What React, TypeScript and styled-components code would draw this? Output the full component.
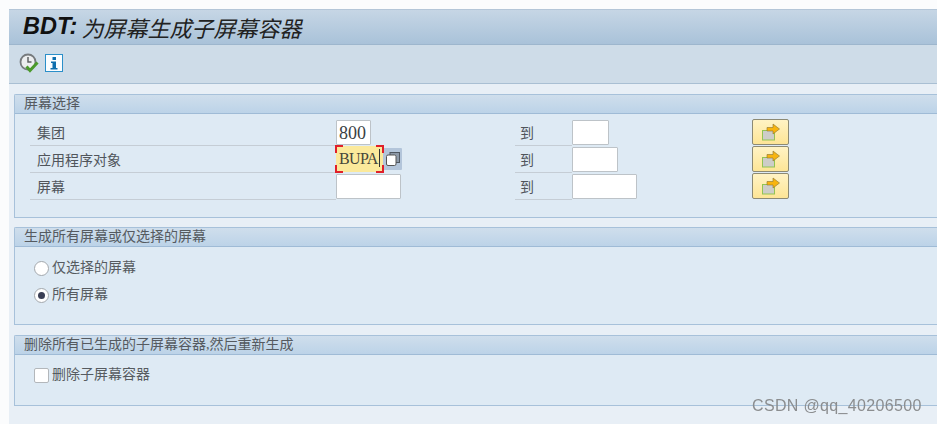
import React, { FC } from 'react';
import styled, { createGlobalStyle } from 'styled-components';

const GlobalStyle = createGlobalStyle`
  html, body {
    margin: 0;
    padding: 0;
    width: 937px;
    height: 424px;
    overflow: hidden;
    background: #fbfcfd;
    font-family: 'Liberation Serif', 'Noto Sans CJK SC', serif;
  }
`;

const Page = styled.div`
  width: 928px;
  height: 415px;
  margin: 9px 0 0 9px;
  background: #e8eff6;
  display: flex;
  flex-direction: column;
`;

const TitleBar = styled.div`
  height: 36px;
  box-sizing: border-box;
  padding: 0 0 1px 14px;
  display: flex;
  align-items: center;
  gap: 4px;
  background: linear-gradient(#c6d6e5, #a9c2d9);
  border-top: 1px solid #b4c6d8;
  border-bottom: 1px solid #9db6cd;
  color: #222;
  font-size: 22px;
  font-style: italic;
  white-space: nowrap;
`;

const TitleCode = styled.b`
  font-family: 'Liberation Sans', sans-serif;
  font-size: 23.5px;
  font-weight: 700;
  color: #111;
`;

const Toolbar = styled.div`
  height: 39px;
  box-sizing: border-box;
  padding: 0 0 3px 10px;
  display: flex;
  align-items: center;
  gap: 6px;
  background: #cedce8;
  border-bottom: 1px solid #a9bfd3;
`;

const Groups = styled.div`
  padding: 10px 0 0 5px;
  display: flex;
  flex-direction: column;
`;

const Group = styled.section<{ $height: number; $gap: number }>`
  height: ${(p) => p.$height}px;
  margin-bottom: ${(p) => p.$gap}px;
  box-sizing: border-box;
  background: #deeaf4;
  border: 1px solid #a7c1da;
  border-right: none;
  border-top-left-radius: 2px;
`;

const GroupHeader = styled.h2`
  height: 19px;
  margin: 0;
  box-sizing: border-box;
  padding-left: 9px;
  background: linear-gradient(#cfdeec, #bcd3e8);
  border-bottom: 1px solid #9fbbd6;
  color: #555a60;
  font-size: 14px;
  font-weight: 400;
  line-height: 18px;
`;

const FieldList = styled.div`
  padding: 5px 0 0 15px;
  display: flex;
  flex-direction: column;
  gap: 1px;
`;

const FieldRow = styled.div`
  height: 26px;
  display: grid;
  grid-template-columns: 306px 179px 57px 180px 37px;
  align-items: stretch;
`;

const FieldLabel = styled.div`
  box-sizing: border-box;
  padding: 4px 0 0 7px;
  border-bottom: 1px solid #c5cdd5;
  color: #50555b;
  font-size: 14px;
  line-height: 22px;
`;

const ToLabel = styled(FieldLabel)`
  padding-left: 5px;
`;

const InputCell = styled.div`
  display: flex;
  align-items: flex-start;
`;

const TextBox = styled.div<{ $width: number }>`
  width: ${(p) => p.$width}px;
  height: 25px;
  margin-top: 1px;
  box-sizing: border-box;
  padding-left: 2px;
  background: #fff;
  border: 1px solid #bdc3c8;
  border-radius: 1px;
  color: #3a3f44;
  font-family: 'Liberation Serif', serif;
  font-size: 18px;
  line-height: 24px;
`;

const FocusBox = styled.div`
  position: relative;
  width: 47px;
  height: 26px;
  box-sizing: border-box;
  padding-left: 3px;
  background: #fbe99b;
  color: #46463a;
  font-size: 16px;
  letter-spacing: -0.6px;
  line-height: 26px;
  white-space: nowrap;
`;

const Caret = styled.span`
  display: inline-block;
  width: 1px;
  height: 18px;
  margin-left: 1px;
  vertical-align: -3px;
  background: #333;
`;

const Corner = styled.i<{ $v: 'top' | 'bottom'; $h: 'left' | 'right' }>`
  position: absolute;
  ${(p) => p.$v}: -1px;
  ${(p) => p.$h}: -1px;
  width: 6px;
  height: 6px;
  border-${(p) => p.$v}: 2px solid #e0202a;
  border-${(p) => p.$h}: 2px solid #e0202a;
`;

const MultiButton = styled.div`
  width: 19px;
  height: 22px;
  margin-top: 2px;
  display: flex;
  align-items: center;
  justify-content: center;
  background: #b3c5da;
  border-radius: 1px;
`;

const ArrowButton = styled.div`
  width: 37px;
  height: 26px;
  box-sizing: border-box;
  display: flex;
  align-items: center;
  justify-content: center;
  background: linear-gradient(#fff3c4, #fde596);
  border: 1px solid #8c8a74;
  border-radius: 2px;
`;

const OptionList = styled.div<{ $top: number }>`
  padding: ${(p) => p.$top}px 0 0 19px;
  display: flex;
  flex-direction: column;
  gap: 9px;
`;

const Option = styled.label`
  height: 18px;
  display: flex;
  align-items: center;
  gap: 3px;
  color: #565b60;
  font-size: 14px;
  line-height: 18px;
`;

const Radio = styled.span<{ $checked?: boolean }>`
  width: 15px;
  height: 15px;
  box-sizing: border-box;
  display: flex;
  align-items: center;
  justify-content: center;
  background: #fff;
  border: 1px solid #a3a8ad;
  border-radius: 50%;

  &::after {
    content: '';
    display: ${(p) => (p.$checked ? 'block' : 'none')};
    width: 7px;
    height: 7px;
    border-radius: 50%;
    background: #3a3f55;
  }
`;

const CheckBox = styled.span`
  width: 15px;
  height: 15px;
  box-sizing: border-box;
  background: #fff;
  border: 1px solid #b3b7bb;
  border-radius: 2px;
`;

const Watermark = styled.div`
  position: fixed;
  left: 752px;
  top: 397px;
  color: #8b8d8f;
  font-family: 'Liberation Sans', sans-serif;
  font-size: 16px;
  line-height: 18px;
  letter-spacing: 0.35px;
`;

const ExecuteIcon: FC = () => (
  <svg width="20" height="20" viewBox="0 0 20 20">
    <circle cx="9" cy="9" r="7.5" fill="#eceeef" stroke="#777b7e" strokeWidth="1.8" />
    <path d="M9 4v5l3.5 0" fill="none" stroke="#5f6366" strokeWidth="1.5" />
    <path d="M7.5 13.5l3.5 4L18.5 9.5" fill="none" stroke="#4b9a2c" strokeWidth="3" />
  </svg>
);

const InfoIcon: FC = () => (
  <svg width="18" height="18" viewBox="0 0 18 18">
    <rect x="0.5" y="0.5" width="17" height="17" fill="#fbfdff" stroke="#2b8fc9" />
    <rect x="7.5" y="3" width="3.5" height="3" fill="#0f6fae" />
    <path d="M6 7.5h5v6.5h1.5v1.5h-7V14H7.5V9H6z" fill="#0f6fae" />
  </svg>
);

const CopyIcon: FC = () => (
  <svg width="16" height="16" viewBox="0 0 16 16">
    <rect x="5" y="1.5" width="9.5" height="10" fill="#8d99a8" stroke="#4e5660" />
    <rect x="1.5" y="4" width="9.5" height="10.5" rx="1.5" fill="#fff" stroke="#555" />
  </svg>
);

const MoveIcon: FC = () => (
  <svg width="20" height="18" viewBox="0 0 20 18">
    <rect x="1.5" y="7.5" width="12" height="9.5" fill="#cdcdc8" stroke="#93c452" />
    <path d="M6 4.5h6V1l6.5 5L12 11V8H6z" fill="#f7b40f" stroke="#8a7433" strokeWidth="0.6" />
  </svg>
);

const FIELDS = [
  { label: '集团', lowWidth: 35, highWidth: 37 },
  { label: '应用程序对象', lowWidth: 47, highWidth: 46 },
  { label: '屏幕', lowWidth: 65, highWidth: 65 },
];

const App: FC = () => (
  <>
    <GlobalStyle />
    <Page>
      <TitleBar>
        <TitleCode>BDT:</TitleCode>
        为屏幕生成子屏幕容器
      </TitleBar>
      <Toolbar>
        <ExecuteIcon />
        <InfoIcon />
      </Toolbar>
      <Groups>
        <Group $height={124} $gap={9}>
          <GroupHeader>屏幕选择</GroupHeader>
          <FieldList>
            {FIELDS.map((field, index) => (
              <FieldRow key={field.label}>
                <FieldLabel>{field.label}</FieldLabel>
                <InputCell>
                  {index === 0 && <TextBox $width={field.lowWidth}>800</TextBox>}
                  {index === 1 && (
                    <>
                      <FocusBox>
                        BUPA
                        <Caret />
                        <Corner $v="top" $h="left" />
                        <Corner $v="top" $h="right" />
                        <Corner $v="bottom" $h="left" />
                        <Corner $v="bottom" $h="right" />
                      </FocusBox>
                      <MultiButton>
                        <CopyIcon />
                      </MultiButton>
                    </>
                  )}
                  {index === 2 && <TextBox $width={field.lowWidth} />}
                </InputCell>
                <ToLabel>到</ToLabel>
                <InputCell>
                  <TextBox $width={field.highWidth} />
                </InputCell>
                <ArrowButton>
                  <MoveIcon />
                </ArrowButton>
              </FieldRow>
            ))}
          </FieldList>
        </Group>
        <Group $height={98} $gap={10}>
          <GroupHeader>生成所有屏幕或仅选择的屏幕</GroupHeader>
          <OptionList $top={12}>
            <Option>
              <Radio />
              仅选择的屏幕
            </Option>
            <Option>
              <Radio $checked />
              所有屏幕
            </Option>
          </OptionList>
        </Group>
        <Group $height={71} $gap={0}>
          <GroupHeader>删除所有已生成的子屏幕容器,然后重新生成</GroupHeader>
          <OptionList $top={11}>
            <Option>
              <CheckBox />
              删除子屏幕容器
            </Option>
          </OptionList>
        </Group>
      </Groups>
    </Page>
    <Watermark>CSDN @qq_40206500</Watermark>
  </>
);

export default App;
